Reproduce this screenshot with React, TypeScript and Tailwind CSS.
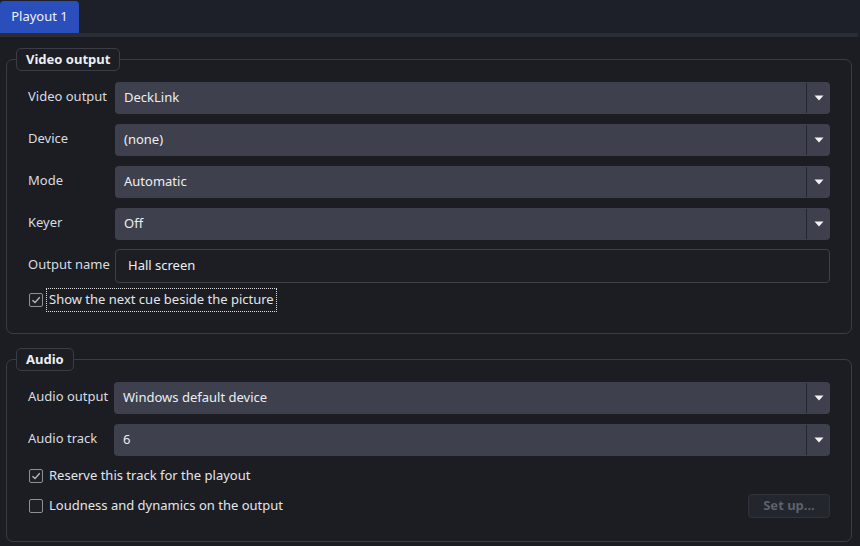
import React from "react";

const VIDEO_COMBOS = [
  { label: "Video output", value: "DeckLink" },
  { label: "Device", value: "(none)" },
  { label: "Mode", value: "Automatic" },
  { label: "Keyer", value: "Off" },
];

const AUDIO_COMBOS = [
  { label: "Audio output", value: "Windows default device" },
  { label: "Audio track", value: "6" },
];

function Combo({ label, value, labelW }: { label: string; value: string; labelW: string }) {
  return (
    <div className="flex items-center h-[32px]">
      <div className={`${labelW} shrink-0 text-[13px] text-[#d9dbe1] -mt-[3px]`}>{label}</div>
      <div className="flex-1 h-full flex items-stretch rounded-[4px] bg-[#3e414d]">
        <div className="flex-1 flex items-center pl-[9px] text-[13px] text-[#eceef2]">{value}</div>
        <div className="w-[1px] my-[1px] bg-[#25272e]" />
        <div className="w-[23px] flex items-center justify-center">
          <svg width="10" height="6" viewBox="0 0 10 6">
            <path d="M0.5 0.5 L9.5 0.5 L5 5.5 Z" fill="#f2f3f5" />
          </svg>
        </div>
      </div>
    </div>
  );
}

function Check({ checked, label, focused }: { checked: boolean; label: string; focused?: boolean }) {
  return (
    <div className="flex items-center h-[20px]">
      <div className="ml-[1px] w-[14px] h-[14px] rounded-[2px] border border-[#8d9099] bg-[#1e2026] flex items-center justify-center">
        {checked && (
          <svg width="10" height="10" viewBox="0 0 10 10">
            <path d="M1.5 5.2 L4 7.6 L8.7 2.2" stroke="#b9bcc3" strokeWidth="1.4" fill="none" />
          </svg>
        )}
      </div>
      <div
        className={`ml-[3px] px-[2px] py-[1px] text-[13px] text-[#e3e5ea] border ${
          focused ? "border-dotted border-[#e0e0e0]" : "border-transparent"
        }`}
      >
        {label}
      </div>
    </div>
  );
}

function Group({ title, children }: { title: string; children: React.ReactNode }) {
  return (
    <fieldset className="ml-[6px] mr-[8px] px-[9px] border border-[#3a3d45] rounded-[7px]">
      <legend className="px-[9px] h-[23px] leading-[20px] rounded-[5px] border border-[#3a3d45] bg-[#1c1e24] text-[13px] font-bold text-[#eceef2]">
        {title}
      </legend>
      {children}
    </fieldset>
  );
}

export default function App() {
  return (
    <div
      className="w-[860px] h-[546px] overflow-hidden bg-[#1b1d22]"
      style={{ fontFamily: '"Noto Sans", "Open Sans", sans-serif' }}
    >
      {/* tab bar */}
      <div className="bg-[#1e2029] pt-[1px]">
        <div className="flex">
          <div className="w-[79px] h-[32px] rounded-t-[4px] bg-[#2a4fbd] flex items-center justify-center text-[13px] text-[#eef1fb]">
            Playout 1
          </div>
        </div>
        <div className="h-[4px] w-[858px] bg-[#2a2d36]" />
      </div>

      <div className="pt-[11px]">
        <Group title="Video output">
          <div className="px-[12px] pt-[11px] pb-[23px] flex flex-col">
            <div className="flex flex-col gap-[10px]">
              {VIDEO_COMBOS.map((c) => (
                <Combo key={c.label} label={c.label} value={c.value} labelW="w-[87px]" />
              ))}
              <div className="flex items-center h-[34px] -mt-[1px]">
                <div className="w-[87px] shrink-0 text-[13px] text-[#d9dbe1] -mt-[3px]">Output name</div>
                <div className="flex-1 h-full flex items-center rounded-[4px] border border-[#3d4049] bg-[#1c1e23] pl-[12px] text-[13px] text-[#eceef2]">
                  Hall screen
                </div>
              </div>
            </div>
            <div className="mt-[7px]">
              <Check checked label="Show the next cue beside the picture" focused />
            </div>
          </div>
        </Group>

        <div className="h-[14px]" />

        <Group title="Audio">
          <div className="px-[12px] pt-[11px] pb-[23px] flex flex-col">
            <div className="flex flex-col gap-[10px]">
              {AUDIO_COMBOS.map((c) => (
                <Combo key={c.label} label={c.label} value={c.value} labelW="w-[86px]" />
              ))}
            </div>
            <div className="mt-[10px]">
              <Check checked label="Reserve this track for the playout" />
            </div>
            <div className="mt-[8px] flex items-center justify-between">
              <Check checked={false} label="Loudness and dynamics on the output" />
              <div className="w-[82px] h-[24px] rounded-[4px] border border-[#30333b] bg-[#23262d] flex items-center justify-center text-[13px] font-bold text-[#5d616b]">
                Set up...
              </div>
            </div>
          </div>
        </Group>
      </div>
    </div>
  );
}
